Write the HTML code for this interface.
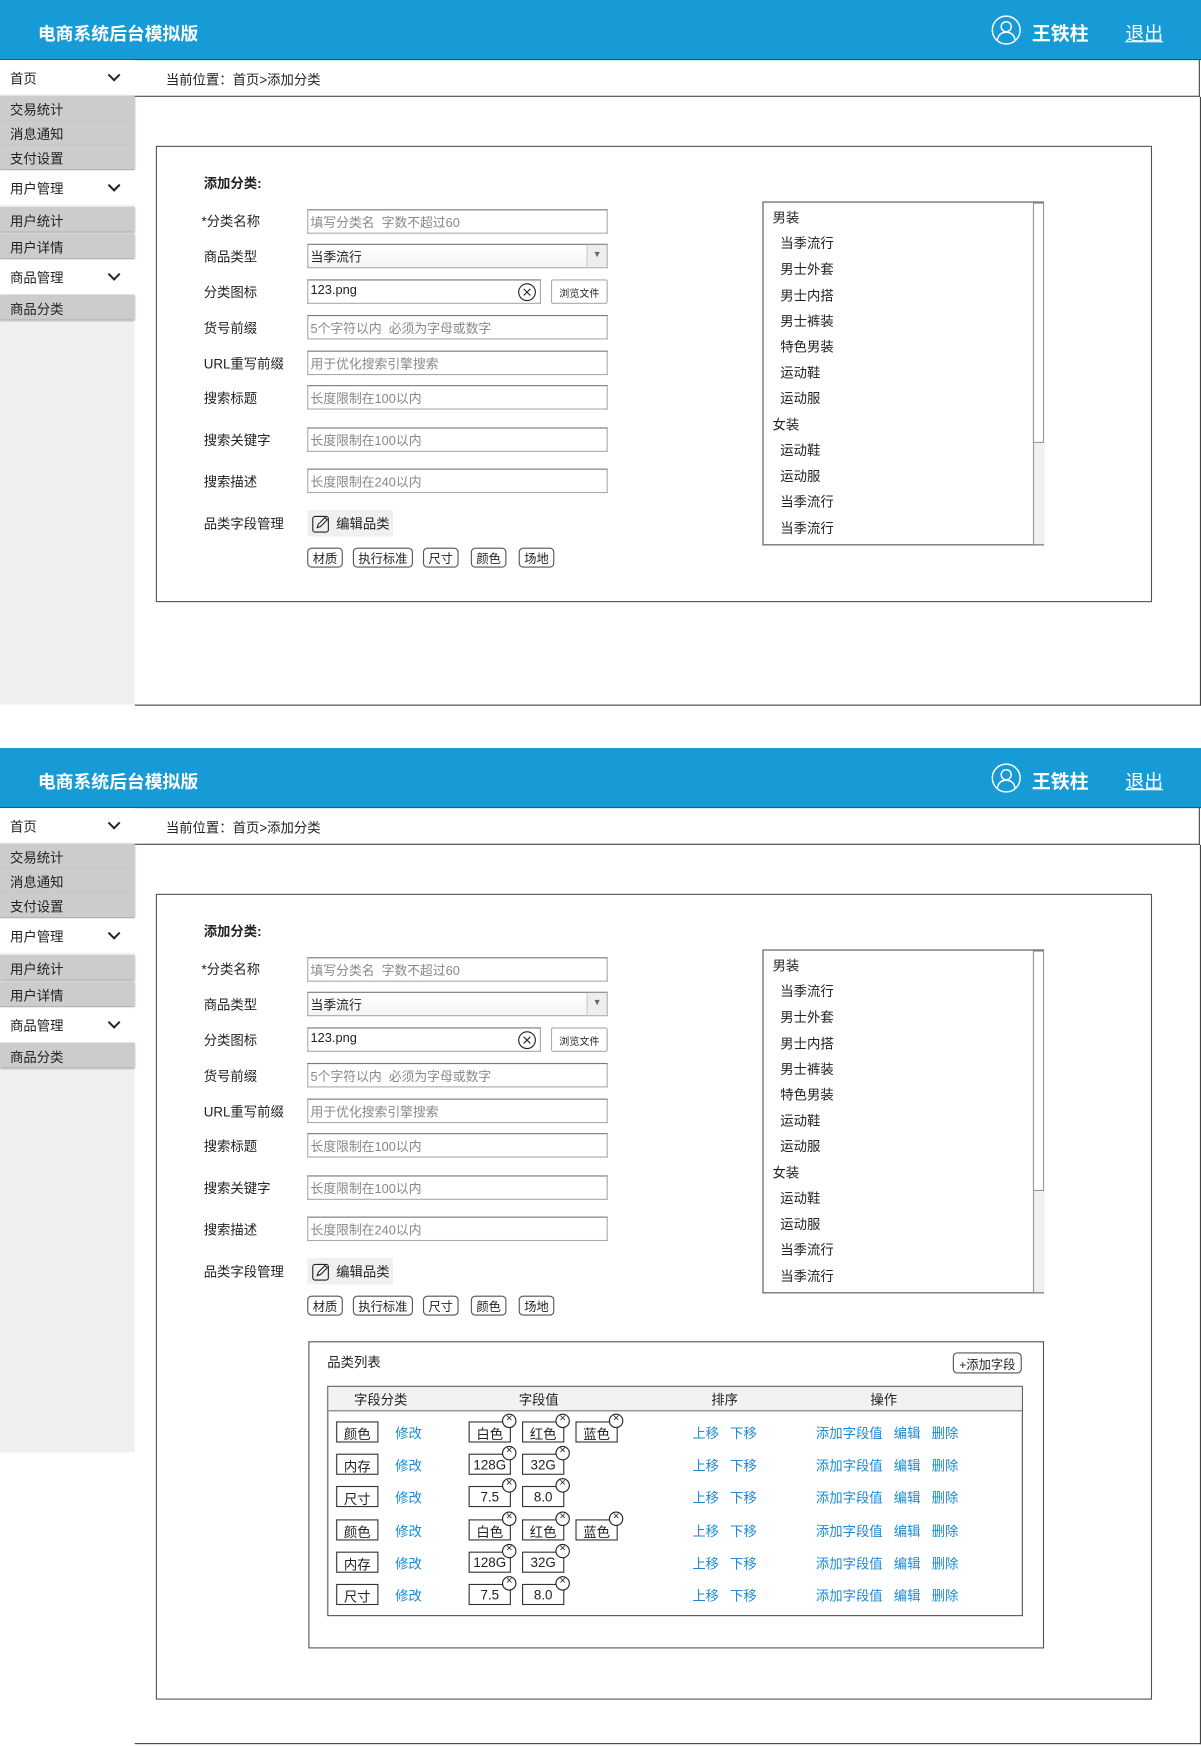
<!DOCTYPE html>
<html><head><meta charset="utf-8"><style>
*{margin:0;padding:0;box-sizing:border-box}
html,body{width:1201px;height:1746px;overflow:hidden;background:#fff}
body{font-family:"Liberation Sans","Noto Sans CJK SC",sans-serif;font-size:12px;color:#222}
#w{position:absolute;left:0;top:0;width:1079px;height:1569px;transform:scale(1.11307);transform-origin:0 0}
.a{position:absolute}
.sec{position:absolute;left:0;width:1079px}
.hd{position:absolute;left:0;top:0;width:1079px;height:54px;background:#179bd6;border-bottom:1px solid #5a4a40;color:#fff}
.hd .t{position:absolute;left:34px;top:17px;font-size:16px;font-weight:bold}
.hd .u{position:absolute;left:927px;top:16px;font-size:17px;font-weight:bold}
.hd .q{position:absolute;left:1011px;top:16px;font-size:17px;text-decoration:underline}
.sb{position:absolute;left:0;top:54px;width:121px;background:#f0f0f0}
.m{position:absolute;left:0;width:121px;height:31px;background:#fff;padding:8px 9px;font-size:12px}
.m i{position:absolute;right:14px;top:9px;width:9px;height:9px;border-right:2px solid #222;border-bottom:2px solid #222;transform:rotate(45deg) scale(.9)}
.s{position:absolute;left:0;width:121px;height:22px;background:#ccc;padding:4px 9px;box-shadow:0 1px 2px #999}
.bc{position:absolute;left:121px;top:54px;width:957px;height:33px;border-bottom:1px solid #444;border-right:1px solid #444;padding:9px 28px}
.mn{position:absolute;left:121px;top:87px;width:958px;border-right:1px solid #444;border-bottom:1px solid #444}
.box{position:absolute;left:140px;width:895px;border:1px solid #555}
.lb{position:absolute;left:183px}
.in{position:absolute;left:276px;width:270px;height:22px;border:1px solid #aaa;border-top-color:#777;padding:3px 2px;color:#888;font-size:11.5px}
.tag{position:absolute;height:18px;border:1px solid #555;border-radius:4px;padding:1px 4px;font-size:11px}
.tree{position:absolute;left:685px;width:253px;height:309px;border:1px solid #555}
.tree div{position:absolute;font-size:12px}
.blue{color:#1a8ad4}
.cb{position:absolute;left:302px;width:38px;height:19px;border:1px solid #333;text-align:center;padding-top:2px}
.vb{position:absolute;width:38px;height:19px;border:1px solid #333;text-align:center;padding-top:2px}
.vb:after{content:"×";position:absolute;right:-6px;top:-8px;width:11px;height:11px;border:1px solid #222;border-radius:50%;font-size:10px;line-height:8px;text-align:center;background:#fff}
</style></head><body><div id="w">

<div class="sec" style="top:0;height:634px">
<div class="hd"><div class="t">电商系统后台模拟版</div>
<svg class="a" style="left:890px;top:13px" width="28" height="28" viewBox="0 0 28 28"><circle cx="14" cy="14" r="12.5" fill="none" stroke="#fff" stroke-width="1.3"/><circle cx="14" cy="11" r="4.5" fill="none" stroke="#fff" stroke-width="1.3"/><path d="M6 23c1-5 4-7 8-7s7 2 8 7" fill="none" stroke="#fff" stroke-width="1.3"/></svg>
<div class="u">王铁柱</div><div class="q">退出</div></div>
<div class="sb" style="height:579px">
<div class="m" style="top:0">首页<i></i></div>
<div class="s" style="top:32px">交易统计</div><div class="s" style="top:54px">消息通知</div><div class="s" style="top:76px">支付设置</div>
<div class="m" style="top:99px">用户管理<i></i></div>
<div class="s" style="top:132px">用户统计</div><div class="s" style="top:156px">用户详情</div>
<div class="m" style="top:179px">商品管理<i></i></div>
<div class="s" style="top:211px">商品分类</div>
</div>
<div class="bc">当前位置：首页&gt;添加分类</div>
<div class="mn" style="height:547px"></div>
<div class="box" style="top:131px;height:410px"></div>
<div class="lb" style="top:156px;font-weight:bold">添加分类:</div>
<div class="lb" style="top:190px;left:181px">*分类名称</div><div class="in" style="top:188px">填写分类名&nbsp; 字数不超过60</div>
<div class="lb" style="top:222px">商品类型</div><div class="in" style="top:219px;color:#222;background:linear-gradient(#fff,#f4f4f4)">当季流行<span class="a" style="right:0;top:0;width:18px;height:20px;border-left:1px solid #ccc;background:#eee;font-size:8px;text-align:center;padding-top:4px;color:#666">▼</span></div>
<div class="lb" style="top:254px">分类图标</div><div class="in" style="top:251px;width:210px;color:#222">123.png<svg class="a" style="left:188px;top:2px" width="17" height="17"><circle cx="8.5" cy="8.5" r="7.5" fill="none" stroke="#222"/><path d="M5.5 5.5l6 6M11.5 5.5l-6 6" stroke="#222"/></svg></div>
<div class="a" style="left:495px;top:251px;width:51px;height:22px;border:1px solid #aaa;border-radius:2px;font-size:9px;text-align:center;padding-top:5px">浏览文件</div>
<div class="lb" style="top:286px">货号前缀</div><div class="in" style="top:283px">5个字符以内&nbsp; 必须为字母或数字</div>
<div class="lb" style="top:318px">URL重写前缀</div><div class="in" style="top:315px">用于优化搜索引擎搜索</div>
<div class="lb" style="top:349px">搜索标题</div><div class="in" style="top:346px">长度限制在100以内</div>
<div class="lb" style="top:387px">搜索关键字</div><div class="in" style="top:384px">长度限制在100以内</div>
<div class="lb" style="top:424px">搜索描述</div><div class="in" style="top:421px">长度限制在240以内</div>
<div class="lb" style="top:462px">品类字段管理</div>
<div class="a" style="left:276px;top:458px;width:77px;height:24px;background:#f0f0f0;padding:4px 0 0 26px">编辑品类<svg class="a" style="left:4px;top:4px" width="17" height="17"><rect x="1" y="2" width="14" height="14" rx="2" fill="none" stroke="#222"/><path d="M5 12l1-3 6-6 2 2-6 6z" fill="#fff" stroke="#222"/></svg></div>
<div class="tag" style="left:276px;top:492px">材质</div><div class="tag" style="left:317px;top:492px">执行标准</div><div class="tag" style="left:380px;top:492px">尺寸</div><div class="tag" style="left:423px;top:492px">颜色</div><div class="tag" style="left:466px;top:492px">场地</div>
<div class="tree" style="top:181px">
<div style="left:8px;top:5px">男装</div><div style="left:15px;top:28px">当季流行</div><div style="left:15px;top:51px">男士外套</div><div style="left:15px;top:75px">男士内搭</div><div style="left:15px;top:98px">男士裤装</div><div style="left:15px;top:121px">特色男装</div><div style="left:15px;top:144px">运动鞋</div><div style="left:15px;top:167px">运动服</div><div style="left:8px;top:191px">女装</div><div style="left:15px;top:214px">运动鞋</div><div style="left:15px;top:237px">运动服</div><div style="left:15px;top:260px">当季流行</div><div style="left:15px;top:284px">当季流行</div>
<span class="a" style="left:242px;top:0;width:10px;height:307px;background:#f0f0f0;border-left:1px solid #999"></span>
<span class="a" style="left:242px;top:0;width:10px;height:216px;background:#fff;border:1px solid #999"></span>
</div>
</div>

<div class="sec" style="top:672px;height:896px">
<div class="hd"><div class="t">电商系统后台模拟版</div>
<svg class="a" style="left:890px;top:13px" width="28" height="28" viewBox="0 0 28 28"><circle cx="14" cy="14" r="12.5" fill="none" stroke="#fff" stroke-width="1.3"/><circle cx="14" cy="11" r="4.5" fill="none" stroke="#fff" stroke-width="1.3"/><path d="M6 23c1-5 4-7 8-7s7 2 8 7" fill="none" stroke="#fff" stroke-width="1.3"/></svg>
<div class="u">王铁柱</div><div class="q">退出</div></div>
<div class="sb" style="height:579px">
<div class="m" style="top:0">首页<i></i></div>
<div class="s" style="top:32px">交易统计</div><div class="s" style="top:54px">消息通知</div><div class="s" style="top:76px">支付设置</div>
<div class="m" style="top:99px">用户管理<i></i></div>
<div class="s" style="top:132px">用户统计</div><div class="s" style="top:156px">用户详情</div>
<div class="m" style="top:179px">商品管理<i></i></div>
<div class="s" style="top:211px">商品分类</div>
</div>
<div class="bc">当前位置：首页&gt;添加分类</div>
<div class="mn" style="height:808px"></div>
<div class="box" style="top:131px;height:724px"></div>
<div class="lb" style="top:156px;font-weight:bold">添加分类:</div>
<div class="lb" style="top:190px;left:181px">*分类名称</div><div class="in" style="top:188px">填写分类名&nbsp; 字数不超过60</div>
<div class="lb" style="top:222px">商品类型</div><div class="in" style="top:219px;color:#222;background:linear-gradient(#fff,#f4f4f4)">当季流行<span class="a" style="right:0;top:0;width:18px;height:20px;border-left:1px solid #ccc;background:#eee;font-size:8px;text-align:center;padding-top:4px;color:#666">▼</span></div>
<div class="lb" style="top:254px">分类图标</div><div class="in" style="top:251px;width:210px;color:#222">123.png<svg class="a" style="left:188px;top:2px" width="17" height="17"><circle cx="8.5" cy="8.5" r="7.5" fill="none" stroke="#222"/><path d="M5.5 5.5l6 6M11.5 5.5l-6 6" stroke="#222"/></svg></div>
<div class="a" style="left:495px;top:251px;width:51px;height:22px;border:1px solid #aaa;border-radius:2px;font-size:9px;text-align:center;padding-top:5px">浏览文件</div>
<div class="lb" style="top:286px">货号前缀</div><div class="in" style="top:283px">5个字符以内&nbsp; 必须为字母或数字</div>
<div class="lb" style="top:318px">URL重写前缀</div><div class="in" style="top:315px">用于优化搜索引擎搜索</div>
<div class="lb" style="top:349px">搜索标题</div><div class="in" style="top:346px">长度限制在100以内</div>
<div class="lb" style="top:387px">搜索关键字</div><div class="in" style="top:384px">长度限制在100以内</div>
<div class="lb" style="top:424px">搜索描述</div><div class="in" style="top:421px">长度限制在240以内</div>
<div class="lb" style="top:462px">品类字段管理</div>
<div class="a" style="left:276px;top:458px;width:77px;height:24px;background:#f0f0f0;padding:4px 0 0 26px">编辑品类<svg class="a" style="left:4px;top:4px" width="17" height="17"><rect x="1" y="2" width="14" height="14" rx="2" fill="none" stroke="#222"/><path d="M5 12l1-3 6-6 2 2-6 6z" fill="#fff" stroke="#222"/></svg></div>
<div class="tag" style="left:276px;top:492px">材质</div><div class="tag" style="left:317px;top:492px">执行标准</div><div class="tag" style="left:380px;top:492px">尺寸</div><div class="tag" style="left:423px;top:492px">颜色</div><div class="tag" style="left:466px;top:492px">场地</div>
<div class="tree" style="top:181px">
<div style="left:8px;top:5px">男装</div><div style="left:15px;top:28px">当季流行</div><div style="left:15px;top:51px">男士外套</div><div style="left:15px;top:75px">男士内搭</div><div style="left:15px;top:98px">男士裤装</div><div style="left:15px;top:121px">特色男装</div><div style="left:15px;top:144px">运动鞋</div><div style="left:15px;top:167px">运动服</div><div style="left:8px;top:191px">女装</div><div style="left:15px;top:214px">运动鞋</div><div style="left:15px;top:237px">运动服</div><div style="left:15px;top:260px">当季流行</div><div style="left:15px;top:284px">当季流行</div>
<span class="a" style="left:242px;top:0;width:10px;height:307px;background:#f0f0f0;border-left:1px solid #999"></span>
<span class="a" style="left:242px;top:0;width:10px;height:216px;background:#fff;border:1px solid #999"></span>
</div>

<div class="a" style="left:277px;top:533px;width:661px;height:276px;border:1px solid #555"></div>
<div class="a" style="left:294px;top:543px">品类列表</div>
<div class="a" style="left:856px;top:543px;width:62px;height:19px;border:1px solid #555;border-radius:4px;font-size:11px;text-align:center;padding-top:2px">+添加字段</div>
<div class="a" style="left:294px;top:573px;width:625px;height:207px;border:1px solid #555"></div>
<div class="a" style="left:295px;top:574px;width:623px;height:22px;background:#f2f2f2;border-bottom:1px solid #777"></div>
<div class="a" style="left:318px;top:577px">字段分类</div><div class="a" style="left:466px;top:577px">字段值</div><div class="a" style="left:639px;top:577px">排序</div><div class="a" style="left:782px;top:577px">操作</div>

<div class="cb" style="top:605px">颜色</div><div class="a blue" style="left:355px;top:607px">修改</div>
<div class="vb" style="left:421px;top:605px">白色</div><div class="vb" style="left:469px;top:605px">红色</div><div class="vb" style="left:517px;top:605px">蓝色</div>
<div class="a blue" style="left:622px;top:607px">上移&nbsp;&nbsp; 下移</div><div class="a blue" style="left:733px;top:607px">添加字段值&nbsp;&nbsp; 编辑&nbsp;&nbsp; 删除</div>

<div class="cb" style="top:634px">内存</div><div class="a blue" style="left:355px;top:636px">修改</div>
<div class="vb" style="left:421px;top:634px">128G</div><div class="vb" style="left:469px;top:634px">32G</div>
<div class="a blue" style="left:622px;top:636px">上移&nbsp;&nbsp; 下移</div><div class="a blue" style="left:733px;top:636px">添加字段值&nbsp;&nbsp; 编辑&nbsp;&nbsp; 删除</div>

<div class="cb" style="top:663px">尺寸</div><div class="a blue" style="left:355px;top:665px">修改</div>
<div class="vb" style="left:421px;top:663px">7.5</div><div class="vb" style="left:469px;top:663px">8.0</div>
<div class="a blue" style="left:622px;top:665px">上移&nbsp;&nbsp; 下移</div><div class="a blue" style="left:733px;top:665px">添加字段值&nbsp;&nbsp; 编辑&nbsp;&nbsp; 删除</div>

<div class="cb" style="top:693px">颜色</div><div class="a blue" style="left:355px;top:695px">修改</div>
<div class="vb" style="left:421px;top:693px">白色</div><div class="vb" style="left:469px;top:693px">红色</div><div class="vb" style="left:517px;top:693px">蓝色</div>
<div class="a blue" style="left:622px;top:695px">上移&nbsp;&nbsp; 下移</div><div class="a blue" style="left:733px;top:695px">添加字段值&nbsp;&nbsp; 编辑&nbsp;&nbsp; 删除</div>

<div class="cb" style="top:722px">内存</div><div class="a blue" style="left:355px;top:724px">修改</div>
<div class="vb" style="left:421px;top:722px">128G</div><div class="vb" style="left:469px;top:722px">32G</div>
<div class="a blue" style="left:622px;top:724px">上移&nbsp;&nbsp; 下移</div><div class="a blue" style="left:733px;top:724px">添加字段值&nbsp;&nbsp; 编辑&nbsp;&nbsp; 删除</div>

<div class="cb" style="top:751px">尺寸</div><div class="a blue" style="left:355px;top:753px">修改</div>
<div class="vb" style="left:421px;top:751px">7.5</div><div class="vb" style="left:469px;top:751px">8.0</div>
<div class="a blue" style="left:622px;top:753px">上移&nbsp;&nbsp; 下移</div><div class="a blue" style="left:733px;top:753px">添加字段值&nbsp;&nbsp; 编辑&nbsp;&nbsp; 删除</div>
</div>

</div></body></html>
